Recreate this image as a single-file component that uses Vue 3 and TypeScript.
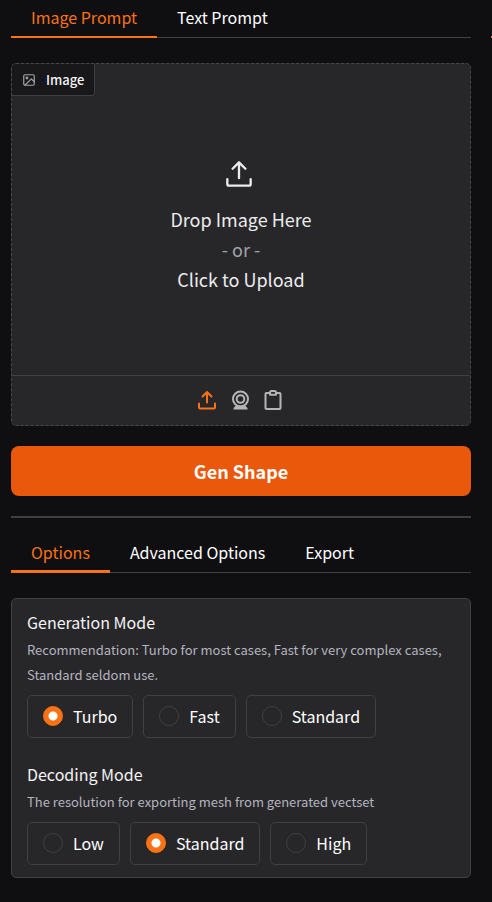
<script setup lang="ts">
import { ref } from 'vue'

interface Group {
  name: string
  title: string
  info: string
  choices: string[]
}

const promptTabs = ['Image Prompt', 'Text Prompt']
const optionTabs = ['Options', 'Advanced Options', 'Export']
const activePrompt = ref('Image Prompt')
const activeOption = ref('Options')

const groups: Group[] = [
  {
    name: 'generation',
    title: 'Generation Mode',
    info: 'Recommendation: Turbo for most cases, Fast for very complex cases, Standard seldom use.',
    choices: ['Turbo', 'Fast', 'Standard'],
  },
  {
    name: 'decoding',
    title: 'Decoding Mode',
    info: 'The resolution for exporting mesh from generated vectset',
    choices: ['Low', 'Standard', 'High'],
  },
]
const selected = ref<Record<string, string>>({ generation: 'Turbo', decoding: 'Standard' })
</script>

<template>
  <div class="page">
    <main class="column">
      <div class="tabs prompt-tabs" role="tablist">
        <button
          v-for="tab in promptTabs"
          :key="tab"
          type="button"
          role="tab"
          class="tab"
          :class="{ active: tab === activePrompt }"
          :aria-selected="tab === activePrompt"
          @click="activePrompt = tab"
        >{{ tab }}</button>
      </div>

      <section class="image-block">
        <div class="block-label">
          <svg class="label-icon" viewBox="0 0 24 24" aria-hidden="true">
            <rect x="3" y="3" width="18" height="18" rx="2" />
            <circle cx="8.5" cy="8.5" r="1.5" />
            <path d="M21 15l-5-5L5 21" />
          </svg>
          <span>Image</span>
        </div>
        <button type="button" class="drop-zone">
          <svg class="drop-icon" viewBox="0 0 24 24" aria-hidden="true">
            <path d="M2 16.500v4A1.500 1.500 0 0 0 3.500 22h17a1.500 1.500 0 0 0 1.500-1.500v-4M12 15.500V2M6.500 7.500 12 2l5.500 5.500" />
          </svg>
          <span>Drop Image Here</span>
          <span class="or">- or -</span>
          <span>Click to Upload</span>
        </button>
        <div class="sources">
          <button type="button" class="source current" aria-label="Upload file">
            <svg viewBox="0 0 20 20" aria-hidden="true">
              <path d="M2 13.500v4a1 1 0 0 0 1 1h14a1 1 0 0 0 1-1v-4M10 12.500V2M5.500 6.500 10 2l4.500 4.500" />
            </svg>
          </button>
          <button type="button" class="source" aria-label="Capture from camera">
            <svg viewBox="0 0 20 20" aria-hidden="true">
              <circle cx="10.500" cy="9" r="7.500" />
              <circle cx="10.500" cy="9" r="3.800" />
              <path class="solid" d="M6 15.500h9l2.500 2.500v1.500h-14V18z" />
            </svg>
          </button>
          <button type="button" class="source" aria-label="Paste from clipboard">
            <svg viewBox="0 0 20 20" aria-hidden="true">
              <path d="M7 3H3.500a1 1 0 0 0-1 1V18a1 1 0 0 0 1 1h13a1 1 0 0 0 1-1V4a1 1 0 0 0-1-1H13M7 4.800V2.500a1.500 1.500 0 0 1 1.500-1.500h3A1.500 1.500 0 0 1 13 2.500v2.300z" />
            </svg>
          </button>
        </div>
      </section>

      <button type="button" class="primary">Gen Shape</button>
      <hr class="divider" />

      <div class="tabs option-tabs" role="tablist">
        <button
          v-for="tab in optionTabs"
          :key="tab"
          type="button"
          role="tab"
          class="tab"
          :class="{ active: tab === activeOption }"
          :aria-selected="tab === activeOption"
          @click="activeOption = tab"
        >{{ tab }}</button>
      </div>

      <section class="panel">
        <fieldset v-for="group in groups" :key="group.name" class="group">
          <legend class="title">{{ group.title }}</legend>
          <p class="info">{{ group.info }}</p>
          <div class="choices">
            <label v-for="choice in group.choices" :key="choice" class="choice">
              <input v-model="selected[group.name]" type="radio" :name="group.name" :value="choice" />
              <span>{{ choice }}</span>
            </label>
          </div>
        </fieldset>
      </section>
    </main>
    <aside class="next-column"></aside>
  </div>
</template>

<style>
body {
  background: #0f0f11;
}
</style>

<style scoped>
.page,
.page * {
  box-sizing: border-box;
}
.page {
  display: flex;
  gap: 20px;
  padding: 0 0 24px 11px;
  color: #f4f4f5;
  font-family: "Noto Sans CJK SC", "Noto Sans", sans-serif;
  font-size: 16px;
  line-height: 24px;
}
button {
  margin: 0;
  padding: 0;
  border: 0;
  background: none;
  color: inherit;
  font: inherit;
  cursor: pointer;
}
.column {
  flex: 1;
  min-width: 0;
}
.next-column {
  width: 1px;
  height: 38px;
  border-bottom: 2px solid #f97316;
}
svg {
  display: block;
  fill: none;
  stroke: currentColor;
  stroke-width: 2;
  stroke-linecap: round;
  stroke-linejoin: round;
}
.tabs {
  display: flex;
  background: linear-gradient(#3f3f46, #3f3f46) bottom / 100% 1px no-repeat;
}
.tab {
  padding: 0 20px;
  border-bottom: 2px solid transparent;
  color: #fff;
}
.tab.active {
  border-color: #f97316;
  color: #f97316;
}
.prompt-tabs .tab {
  height: 38px;
  padding-bottom: 2px;
}
.option-tabs .tab {
  height: 39px;
  border-bottom-width: 3px;
}
.image-block {
  display: flex;
  flex-direction: column;
  position: relative;
  margin-top: 25px;
  border: 1px dashed #46464b;
  border-radius: 5px;
  background: #27272a;
}
.block-label {
  display: flex;
  align-items: center;
  gap: 10px;
  position: absolute;
  top: 0;
  left: 0;
  height: 32px;
  padding: 0 10px;
  border-right: 1px solid #3f3f46;
  border-bottom: 1px solid #3f3f46;
  border-radius: 4px 0 4px 0;
  background: #18181b;
  font-size: 13px;
  font-weight: 500;
}
.label-icon {
  width: 14px;
  height: 14px;
  color: #a1a1aa;
}
.drop-zone {
  display: flex;
  flex-direction: column;
  align-items: center;
  justify-content: center;
  height: 311px;
  padding-top: 14px;
  color: #ececee;
  font-size: 18px;
  line-height: 30px;
}
.drop-icon {
  width: 28px;
  height: 28px;
  margin: 0 4px 16px 0;
}
.or {
  color: #a1a1aa;
}
.sources {
  display: flex;
  align-items: center;
  justify-content: center;
  gap: 13px;
  height: 50px;
  padding: 0 2px 2px 0;
  border-top: 1px solid #3f3f46;
}
.source {
  color: #b4b4ba;
}
.source svg {
  width: 20px;
  height: 20px;
}
.source.current {
  color: #f97316;
}
.source .solid {
  fill: currentColor;
  stroke: none;
}
.primary {
  display: block;
  width: 100%;
  height: 50px;
  margin-top: 20px;
  padding-bottom: 1px;
  border-radius: 8px;
  background: #ea580c;
  color: #fff;
  font-size: 18px;
  font-weight: 700;
}
.divider {
  height: 2px;
  margin: 20px 0 16px;
  border: 0;
  background: #3f3f42;
}
.panel {
  display: flex;
  flex-direction: column;
  gap: 24px;
  margin-top: 25px;
  padding: 11px 15px 12px;
  border: 1px solid #3f3f46;
  border-radius: 5px;
  background: #27272a;
}
.group {
  min-width: 0;
  margin: 0;
  padding: 0;
  border: 0;
}
.title {
  padding: 0;
}
.info {
  margin: 3px 0 8px;
  color: #b4b4bf;
  font-size: 13px;
  line-height: 25px;
}
.choices {
  display: flex;
  flex-wrap: wrap;
  gap: 10px;
}
.choice {
  display: flex;
  align-items: center;
  gap: 10px;
  height: 43px;
  padding: 0 15px 2px;
  border: 1px solid #3f3f46;
  border-radius: 5px;
  color: #fff;
}
.choice input {
  appearance: none;
  width: 20px;
  height: 20px;
  margin: 0;
  border: 1px solid #3f3f46;
  border-radius: 50%;
}
.choice input:checked {
  border-color: #f97316;
  background: radial-gradient(circle, #fff 4px, #f97316 5px);
}
</style>
